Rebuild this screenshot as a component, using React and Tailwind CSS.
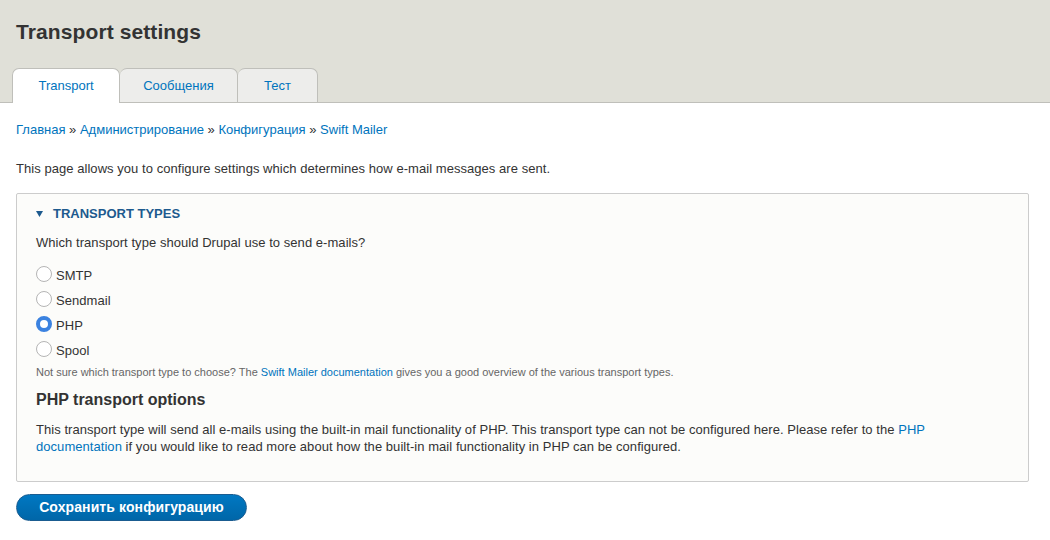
import React, { useState } from 'react'

const font = { fontFamily: '"Liberation Sans", Arial, sans-serif' }

function Radio({ label, checked, onChange }) {
  return (
    <label className="flex h-[25px] cursor-pointer items-center text-[13px] tracking-[0.05px] text-[#333]" onClick={onChange}>
      <span
        className={`mr-[4px] -mt-[3px] inline-block h-[16px] w-[16px] rounded-full bg-white ${
          checked ? 'border-[4px] border-[#3b82e0]' : 'border border-[#b5b5b5]'
        }`}
      />
      {label}
    </label>
  )
}

function App() {
  const [transport, setTransport] = useState('PHP')
  const [open, setOpen] = useState(true)
  const types = ['SMTP', 'Sendmail', 'PHP', 'Spool']

  return (
    <div className="min-h-[540px] bg-white" style={font}>
      {/* ============= header with tabs ============= */}
      <div className="border-b border-[#bfbfba] bg-[#e0e0d8]">
        <h1 className="px-4 pt-[18px] text-[21px] font-bold leading-[28px] tracking-[0.1px] text-[#333]">Transport settings</h1>
        <ul className="mt-[22px] flex pl-[12px]">
          <li className="-mb-px flex h-[35px] w-[108px] items-center justify-center rounded-t-[7px] border border-b-0 border-[#bfbfba] bg-white text-[13px] text-[#0074bd]">
            Transport
          </li>
          <li className="flex h-[34px] w-[118px] items-center justify-center rounded-t-[7px] border border-b-0 border-l-0 border-[#bfbfba] bg-[#ededeb] text-[13px] text-[#0074bd]">
            Сообщения
          </li>
          <li className="flex h-[34px] w-[80px] items-center justify-center rounded-t-[7px] border border-b-0 border-l-0 border-[#bfbfba] bg-[#ededeb] text-[13px] text-[#0074bd]">
            Тест
          </li>
        </ul>
      </div>

      <div className="pl-4 pr-[21px]">
        <div className="mt-[18px] text-[13px] leading-[18px] text-[#333]">
          <a href="#" className="text-[#0074bd]">Главная</a> » <a href="#" className="text-[#0074bd]">Администрирование</a> »{' '}
          <a href="#" className="text-[#0074bd]">Конфигурация</a> » <a href="#" className="text-[#0074bd]">Swift Mailer</a>
        </div>

        <p className="mt-[21px] text-[13px] leading-[18px] tracking-[0.05px] text-[#333]">
          This page allows you to configure settings which determines how e-mail messages are sent.
        </p>

        {/* ============= fieldset ============= */}
        <div className="mt-[15px] rounded-[2px] border border-[#ccc] bg-[#fcfcfa] pb-[26px] pl-[19px] pr-[19px] pt-[11px]">
          <button
            type="button"
            onClick={() => setOpen(!open)}
            className="flex h-[18px] items-center text-[13px] font-bold uppercase text-[#1d5a8e]"
          >
            <svg width="7" height="6" viewBox="0 0 7 6" className="mr-[10px]">
              <path d={open ? 'M0 0H7L3.5 6Z' : 'M0 0V7L6 3.5Z'} fill="#1d5a8e" />
            </svg>
            Transport types
          </button>

          {open && (
            <>
              <p className="mt-[11px] text-[13px] leading-[18px] tracking-[0.05px] text-[#333]">
                Which transport type should Drupal use to send e-mails?
              </p>
              <div className="mt-[11px]">
                {types.map((t) => (
                  <Radio key={t} label={t} checked={transport === t} onChange={() => setTransport(t)} />
                ))}
              </div>
              <p className="mt-[2px] text-[11px] leading-[14px] text-[#666]">
                Not sure which transport type to choose? The{' '}
                <a href="#" className="text-[#0074bd]">Swift Mailer documentation</a> gives you a good overview of the various transport types.
              </p>

              <h2 className="mt-[10px] text-[16px] font-bold leading-[22px] text-[#333]">PHP transport options</h2>
              <p className="mt-[10px] text-[13px] leading-[17px] tracking-[0.05px] text-[#333]">
                This transport type will send all e-mails using the built-in mail functionality of PHP. This transport type can not be configured here. Please refer to the{' '}
                <a href="#" className="text-[#0074bd]">PHP documentation</a> if you would like to read more about how the built-in mail functionality in PHP can be configured.
              </p>
            </>
          )}
        </div>

        <button
          type="submit"
          className="mt-[12px] h-[27px] w-[231px] rounded-full border border-[#1a5c90] bg-gradient-to-b from-[#0078c2] to-[#0066a8] text-[14px] font-bold tracking-[0.1px] text-white"
        >
          Сохранить конфигурацию
        </button>
      </div>
    </div>
  )
}

export default App
